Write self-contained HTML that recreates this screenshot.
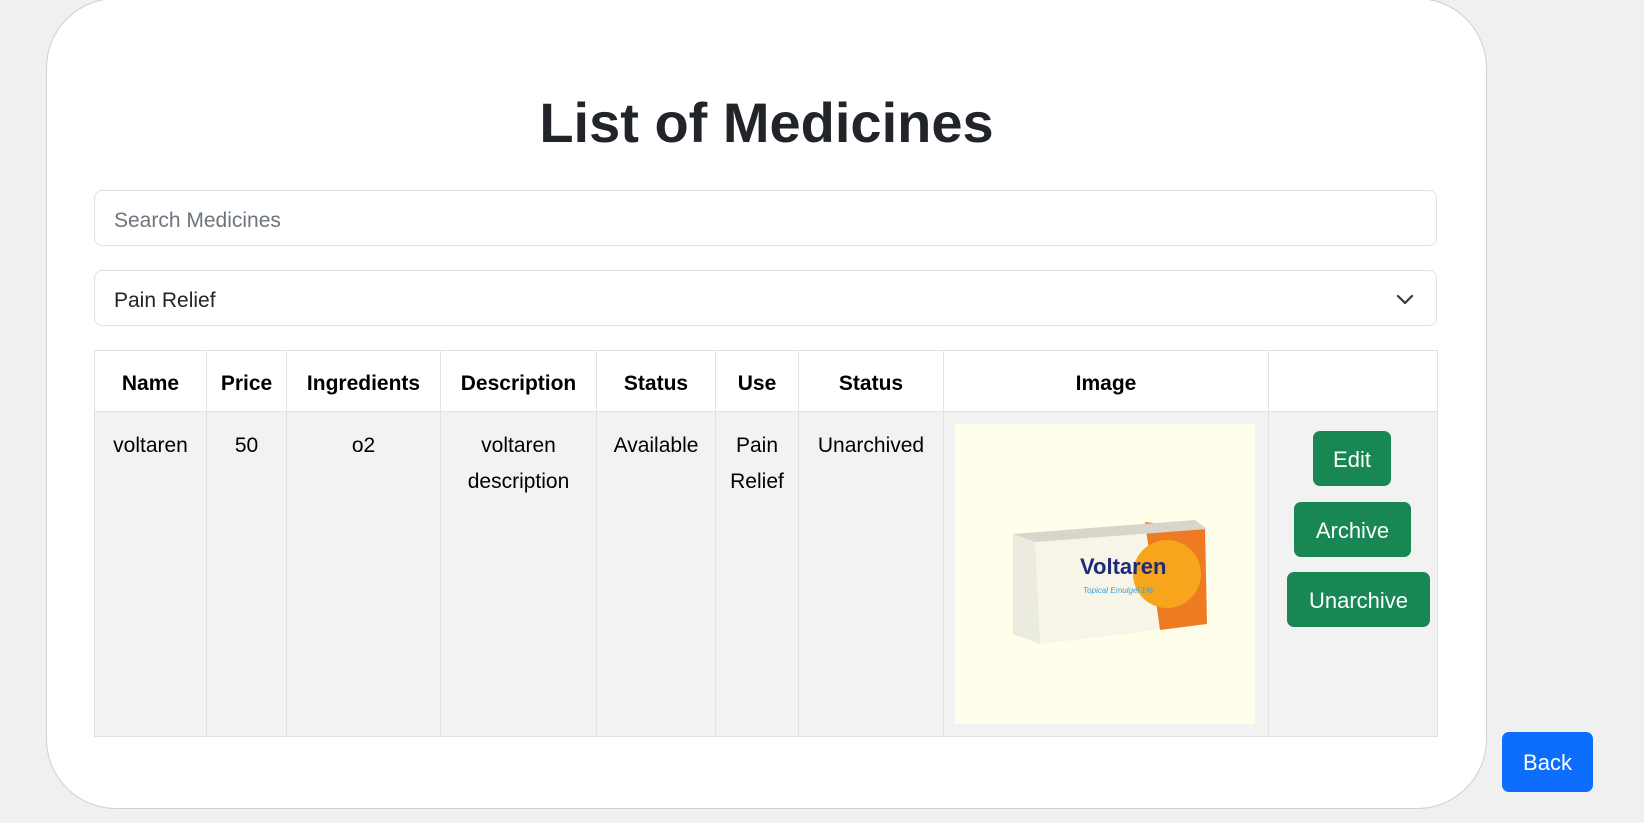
<!DOCTYPE html>
<html><head><meta charset="utf-8"><style>
*{box-sizing:border-box}
body{margin:0;width:1644px;height:823px;background:#f0f0f0;font-family:"Liberation Sans",sans-serif;color:#212529;position:relative;overflow:hidden}
.card{position:absolute;left:46px;top:-2px;width:1441px;height:811px;background:#fff;border:1px solid #d0d0d0;border-radius:70px}
h1{position:absolute;left:0;width:1533px;top:90px;margin:0;text-align:center;font-size:56px;font-weight:600;color:#212529;letter-spacing:0}
.inp{position:absolute;left:94px;width:1343px;height:56px;border:1px solid #dee2e6;border-radius:8px;background:#fff;font-size:21px;padding-left:19px;line-height:59px}
table{position:absolute;left:94px;top:350px;border-collapse:collapse;font-size:21px;color:#000}
td,th{border:1px solid #dee2e6;text-align:center;vertical-align:top;padding:0}
th{height:61px;vertical-align:middle;font-weight:bold;background:#fff;padding-top:5px}
td{height:325px;background:#f2f2f2;line-height:36px;padding-top:16px}
.btn{position:absolute;background:#198754;color:#fff;border-radius:7px;font-size:22px;text-align:center}
</style></head><body>
<div class="card"></div>
<h1>List of Medicines</h1>
<div class="inp" style="top:190px;color:#6c757d">Search Medicines</div>
<div class="inp" style="top:270px;color:#212529">Pain Relief
<svg style="position:absolute;right:22px;top:21px" width="18" height="14" viewBox="0 0 18 14"><path d="M2 4l7 7 7-7" fill="none" stroke="#343a40" stroke-width="2.2" stroke-linecap="round" stroke-linejoin="round"/></svg></div>
<table>
<tr><th style="width:112px">Name</th><th style="width:80px">Price</th><th style="width:154px">Ingredients</th><th style="width:156px">Description</th><th style="width:119px">Status</th><th style="width:83px">Use</th><th style="width:145px">Status</th><th style="width:325px">Image</th><th style="width:169px"></th></tr>
<tr><td>voltaren</td><td>50</td><td>o2</td><td>voltaren<br>description</td><td>Available</td><td>Pain<br>Relief</td><td>Unarchived</td><td></td><td></td></tr>
</table>
<svg style="position:absolute;left:955px;top:424px" width="300" height="300" viewBox="0 0 300 300">
<rect width="300" height="300" fill="#fefeeb"/>
<polygon points="58,110 240,96 252,105 252,200 85,220 58,210" fill="#f7f5e8"/>
<polygon points="190,98 250,105 252,200 205,206" fill="#ee7b22"/>
<polygon points="58,110 240,96 252,105 80,118" fill="#d8d6cc"/>
<polygon points="58,110 80,118 85,220 58,210" fill="#ecebe0"/>
<circle cx="212" cy="150" r="34" fill="#f7a51c"/>
<text x="125" y="150" font-family="Liberation Sans Narrow,Liberation Sans,sans-serif" font-size="22" font-weight="bold" fill="#1e2a7a">Voltaren</text>
<text x="128" y="169" font-size="8" fill="#3aa0d8" font-style="italic">Topical Emulgel 1%</text>
</svg>
<div class="btn" style="left:1313px;top:431px;width:78px;height:55px;line-height:57px">Edit</div>
<div class="btn" style="left:1294px;top:502px;width:117px;height:55px;line-height:57px">Archive</div>
<div class="btn" style="left:1287px;top:572px;width:143px;height:55px;line-height:57px">Unarchive</div>
<div class="btn" style="left:1502px;top:732px;width:91px;height:60px;line-height:62px;background:#0d6efd">Back</div>
</body></html>
